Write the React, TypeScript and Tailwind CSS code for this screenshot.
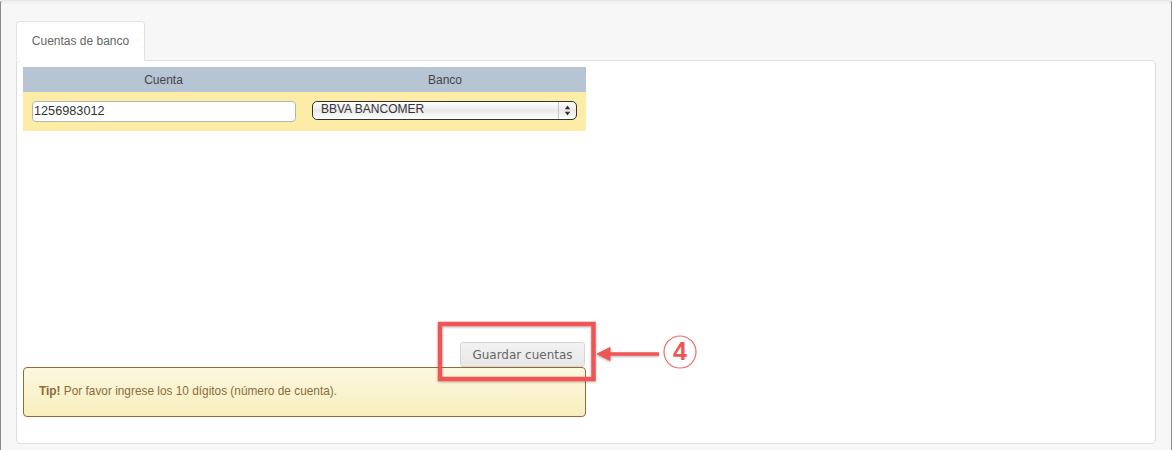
export default function App() {
  return (
    <div className="relative w-[1172px] h-[450px] overflow-hidden bg-[#f7f7f7] font-['Liberation_Sans',sans-serif]">
      <div className="h-[450px] border-x border-x-[#8a8a8a] rounded-t-[3px] border-t border-t-[#e6e6e6] px-[15px] pt-[20px] bg-gradient-to-b from-[#eeeeee] to-[#f7f7f7] to-[4px]">
        <div className="flex">
          <div className="w-[129px] h-[40px] -mb-px relative z-10 bg-white border border-[#e2e2e2] border-b-white rounded-t-[4px] flex items-center justify-center text-[12px] text-[#666666]">
            Cuentas de banco
          </div>
        </div>
        <div className="w-[1140px] h-[384px] bg-white border border-[#dddddd] rounded-[4px] pt-[6px] pl-[6px] flex flex-col">
          <div className="w-[563px]">
            <div className="h-[25px] bg-[#b7c4d4] flex text-[12px] text-[#444444] items-center">
              <div className="w-[281px] text-center">Cuenta</div>
              <div className="w-[282px] text-center">Banco</div>
            </div>
            <div className="h-[39px] bg-[#fdeca6] flex pt-[9px] pl-[9px]">
              <input
                readOnly
                value="1256983012"
                className="w-[264px] h-[21px] bg-white border border-[#b5b5b5] rounded-[4px] pl-[1px] pb-[2px] text-[12.7px] text-[#333333] outline-none"
              />
              <div className="relative ml-[16px] w-[265px] h-[19px]">
                <select className="block w-full h-full appearance-none rounded-[5px] border border-[#333333] bg-gradient-to-b from-[#ffffff] via-[#e9e9e9] to-[#ffffff] pl-[8px] text-[12px] leading-[14px] pb-[3px] text-[#333333] outline-none">
                  <option>BBVA BANCOMER</option>
                </select>
                <div className="absolute right-px top-px bottom-px w-[18px] border-l border-[#c4c4c4] flex items-center justify-center">
                  <svg width="7" height="11" viewBox="0 0 7 11">
                    <path d="M3.5 0.5 L6.2 4.2 H0.8 Z M3.5 10.5 L6.2 6.8 H0.8 Z" fill="#333333" />
                  </svg>
                </div>
              </div>
            </div>
          </div>
          <div className="flex-1" />
          <div className="w-[563px] flex justify-end pr-px">
            <button className="w-[125px] h-[25px] rounded-[3px] border border-[#d6d6d6] bg-gradient-to-b from-[#f2f2f2] to-[#e8e8e8] text-[12px] text-[#666666] font-['DejaVu_Sans',sans-serif]">
              Guardar cuentas
            </button>
          </div>
          <div className="w-[563px] h-[50px] mb-[26px] rounded-[4px] border border-[#8f6b35] bg-gradient-to-b from-[#fcf8e0] to-[#f8eebd] flex items-center px-[15px] text-[11.85px] text-[#8a6d3b]">
            <p><strong className="font-bold">Tip!</strong> Por favor ingrese los 10 dígitos (número de cuenta).</p>
          </div>
        </div>
      </div>

      <svg className="absolute left-0 top-0 pointer-events-none" width="1172" height="450" viewBox="0 0 1172 450" fill="none">
        <defs>
          <filter id="s" x="-10%" y="-10%" width="120%" height="120%">
            <feDropShadow dx="0" dy="1" stdDeviation="1" floodColor="#000000" floodOpacity="0.3" />
          </filter>
        </defs>
        <g filter="url(#s)">
          <rect x="440" y="324" width="153.5" height="55" stroke="#ee5555" strokeWidth="4.5" />
          <path d="M659 354 H608" stroke="#ee5555" strokeWidth="3.5" />
          <path d="M597 354 L610 347.5 V360.5 Z" fill="#ee5555" stroke="#ee5555" strokeWidth="1" strokeLinejoin="round" />
        </g>
        <circle cx="680" cy="352" r="16" fill="#ffffff" stroke="#ee6a6a" strokeWidth="1.2" />
      </svg>
      <div className="absolute left-[664px] top-[336px] w-[32px] h-[32px] flex items-center justify-center text-[25px] font-bold text-[#ee5555]">
        4
      </div>
    </div>
  );
}
